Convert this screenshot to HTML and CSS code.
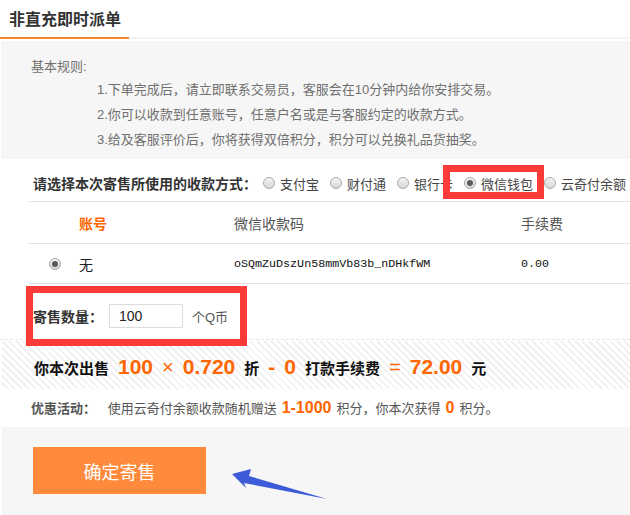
FILE: index.html
```html
<!DOCTYPE html>
<html lang="zh-CN">
<head>
    <meta charset="UTF-8">
    <title>非直充即时派单</title>
    <link rel="stylesheet" href="styles.css">
</head>
<body>
<div id="app">
    <div class="tabs">
        <div class="tab">非直充即时派单</div>
    </div>
    <div class="rules">
        <div class="rules-title">基本规则:</div>
        <ul class="rules-list">
            <li>1.下单完成后，请立即联系交易员，客服会在10分钟内给你安排交易。</li>
            <li>2.你可以收款到任意账号，任意户名或是与客服约定的收款方式。</li>
            <li>3.给及客服评价后，你将获得双倍积分，积分可以兑换礼品货抽奖。</li>
        </ul>
    </div>
    <div class="pay-way">
        <span class="pay-label">请选择本次寄售所使用的收款方式：</span>
        <label class="opt"><i class="radio"></i>支付宝</label>
        <label class="opt"><i class="radio"></i>财付通</label>
        <label class="opt"><i class="radio"></i>银行卡</label>
        <label class="opt"><i class="radio checked"></i>微信钱包</label>
        <label class="opt"><i class="radio"></i>云奇付余额</label>
    </div>
    <div class="account-table">
        <div class="row head">
            <div></div>
            <div class="col-acc">账号</div>
            <div>微信收款码</div>
            <div>手续费</div>
        </div>
        <div class="row">
            <div class="col-radio"><i class="radio checked"></i></div>
            <div>无</div>
            <div class="mono">oSQmZuDszUn58mmVb83b_nDHkfWM</div>
            <div class="mono">0.00</div>
        </div>
    </div>
    <div class="amount">
        <span class="amount-label">寄售数量：</span>
        <input class="amount-input" type="text" value="100">
        <span class="unit">个Q币</span>
    </div>
    <div class="summary">
        <span>你本次出售</span>
        <em>100</em>
        <em class="op">×</em>
        <em>0.720</em>
        <span>折</span>
        <em>-</em>
        <em>0</em>
        <span>打款手续费</span>
        <em class="op">=</em>
        <em>72.00</em>
        <span>元</span>
    </div>
    <div class="promo">
        <span class="promo-label">优惠活动：</span>
        使用云奇付余额收款随机赠送<em>1-1000</em>积分，你本次获得<em>0</em>积分。
    </div>
    <div class="footer">
        <button class="btn-submit">确定寄售</button>
    </div>

    <!-- 标注 -->
    <div class="mark mark-wx"></div>
    <div class="mark mark-num"></div>
    <svg class="arrow" width="630" height="515" viewBox="0 0 630 515">
        <path d="M232,474 L251,469 L249,476 L327,499 L244,483 L246,488 Z" fill="#3b5bd8"/>
    </svg>
</div>
</body>
</html>
```

FILE: styles.css
```css
* {
    margin: 0;
    padding: 0;
    box-sizing: border-box;
}

ul {
    list-style: none;
}

html, body {
    width: 630px;
    height: 515px;
    overflow: hidden;
    background: #fff;
    font-family: "Liberation Sans", "Noto Sans CJK SC", sans-serif;
}

#app {
    position: relative;
    width: 630px;
    height: 515px;
}

em {
    font-style: normal;
}

/* 标签栏 */
.tabs {
    height: 39px;
    border-bottom: 2px solid #f3f3f3;
}

.tab {
    width: 129px;
    height: 39px;
    padding: 2px 0 0 9px;
    line-height: 35px;
    font-size: 16px;
    font-weight: bold;
    color: #333;
    border-bottom: 2px solid #f28a2c;
}

/* 规则 */
.rules {
    margin: 2px 0 0 1px;
    height: 118px;
    padding: 16px 0 0 30px;
    background: #f6f6f6;
    color: #6f6f6f;
    font-size: 13px;
}

.rules-title {
    line-height: 20px;
}

.rules-list {
    padding-left: 66px;
}

.rules-list li {
    line-height: 25px;
}

/* 收款方式 */
.pay-way {
    height: 42px;
    padding: 6px 0 0 33px;
    display: flex;
    align-items: center;
    white-space: nowrap;
}

.pay-label {
    flex-shrink: 0;
    font-size: 14px;
    font-weight: bold;
    color: #333;
    margin-right: 6px;
}

.opt {
    flex-shrink: 0;
    display: flex;
    align-items: center;
    font-size: 13px;
    color: #444;
    margin-right: 11px;
}

.opt:last-child {
    margin-right: 0;
}

.radio {
    flex-shrink: 0;
    display: inline-block;
    width: 12px;
    height: 12px;
    border-radius: 50%;
    border: 1px solid #a9a9a9;
    background: linear-gradient(#f4f4f4, #d6d6d6);
    margin-right: 5px;
    position: relative;
}

.radio.checked::after {
    content: "";
    position: absolute;
    left: 2px;
    top: 2px;
    width: 6px;
    height: 6px;
    border-radius: 50%;
    background: #5a5a5a;
}

/* 账号表格 */
.account-table {
    margin-left: 29px;
    border-top: 1px solid #e3e3e3;
}

.account-table .row {
    display: grid;
    grid-template-columns: 50px 155px 287px 1fr;
    align-items: center;
    height: 40px;
    border-bottom: 1px solid #e3e3e3;
    font-size: 14px;
    color: #222;
}

.account-table .row.head {
    height: 42px;
    color: #555;
}

.account-table .col-acc {
    color: #ff6600;
    font-weight: bold;
}

.account-table .col-radio {
    padding-left: 20px;
    display: flex;
}

.mono {
    font-family: "Liberation Mono", monospace;
    font-size: 11.7px;
    color: #111;
}

/* 寄售数量 */
.amount {
    height: 56px;
    padding: 9px 0 0 33px;
    display: flex;
    align-items: center;
    border-bottom: 1px dashed #e6e6e6;
}

.amount-label {
    font-size: 14px;
    font-weight: bold;
    color: #333;
    margin-right: 6px;
}

.amount-input {
    width: 74px;
    height: 24px;
    border: 1px solid #dcdcdc;
    padding-left: 9px;
    font-size: 14px;
    font-family: "Liberation Sans", sans-serif;
    color: #222;
    outline: none;
}

.unit {
    margin-left: 9px;
    font-size: 13px;
    color: #555;
}

/* 本次出售 */
.summary {
    margin: 1px 0 0 2px;
    height: 48px;
    padding-left: 32px;
    display: flex;
    align-items: baseline;
    gap: 9px;
    padding-top: 14px;
    background: repeating-linear-gradient(45deg, #ffffff 0, #ffffff 3px, #f1f1f1 3px, #f1f1f1 5px);
    font-size: 15px;
    font-weight: bold;
    color: #111;
}

.summary em {
    font-size: 21px;
    color: #ff6600;
}

.summary em.op {
    font-weight: normal;
    font-size: 20px;
}

/* 优惠活动 */
.promo {
    height: 38px;
    line-height: 38px;
    padding-left: 31px;
    font-size: 13px;
    color: #555;
}

.promo-label {
    font-weight: bold;
    margin-right: 8px;
}

.promo em {
    font-size: 16px;
    font-weight: bold;
    color: #ff6600;
    margin: 0 5px;
}

/* 底部按钮 */
.footer {
    margin-left: 2px;
    height: 88px;
    padding: 20px 0 0 31px;
    background: #f6f6f6;
}

.btn-submit {
    width: 173px;
    height: 47px;
    border: none;
    background: #ff8a3c;
    color: #fff;
    font-size: 18px;
    font-family: "Noto Sans CJK SC", sans-serif;
}

/* 红框标注与箭头 */
.mark {
    position: absolute;
    border: 7px solid #fb3a3a;
}

.mark-wx {
    left: 443px;
    top: 165px;
    width: 101px;
    height: 34px;
}

.mark-num {
    left: 26px;
    top: 286px;
    width: 221px;
    height: 60px;
}

.arrow {
    position: absolute;
    left: 0;
    top: 0;
    pointer-events: none;
}
```
